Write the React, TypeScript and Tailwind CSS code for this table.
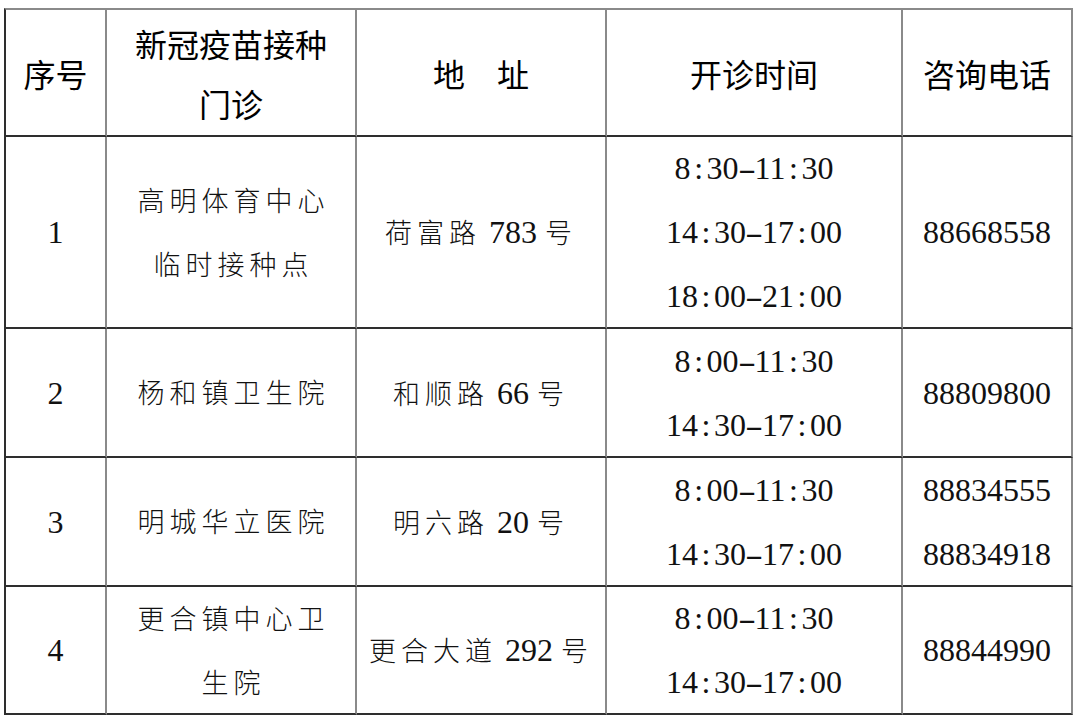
import React from "react";

const CJK = "[font-family:'Noto_Sans_CJK_SC',sans-serif]";
const SERIF = "[font-family:'Liberation_Serif','Noto_Sans_CJK_SC',serif]";

function Num({ s }: { s: string }) {
  return (
    <span className={`${SERIF} text-[32px] text-[#111]`}>
      {s.split("").map((c, i) =>
        c === ":" ? (
          <span key={i} className="inline-block w-[16px] text-center">
            :
          </span>
        ) : c === "-" ? (
          <span key={i} className="inline-block w-[16px] text-center scale-x-[1.7]">
            -
          </span>
        ) : (
          <React.Fragment key={i}>{c}</React.Fragment>
        )
      )}
    </span>
  );
}

function Zh({ s }: { s: string }) {
  return (
    <span className={`${CJK} font-light text-[27px] tracking-[5px] pl-[5px] text-[#111]`}>{s}</span>
  );
}

function Mixed({ parts }: { parts: string[] }) {
  return (
    <span className="whitespace-nowrap">
      {parts.map((p, i) =>
        /^[0-9 ]+$/.test(p) ? (
          <span key={i} className={`${SERIF} text-[32px] text-[#111] whitespace-pre`}>
            {p}
          </span>
        ) : (
          <span key={i} className={`${CJK} font-light text-[27px] tracking-[5px] text-[#111]`}>
            {p}
          </span>
        )
      )}
    </span>
  );
}

const cellBase =
  "flex flex-col items-center justify-center text-center border-r-2 border-r-[#8a8a8a] border-b-2 border-b-[#2e2e2e]";

function Cell({
  col,
  row,
  children,
}: {
  col: number;
  row: number;
  children: React.ReactNode;
}) {
  const cls = [
    cellBase,
    col === 0 ? "border-l-2 border-l-[#2e2e2e]" : "",
    col === 4 ? "border-r-[#2e2e2e]" : "",
    row === 0 ? "border-t-2 border-t-[#8a8a8a]" : "",
  ].join(" ");
  return <div className={cls}>{children}</div>;
}

function Head({ lines }: { lines: string[] }) {
  return (
    <div className={`${CJK} text-[32px] leading-[60px] text-black`}>
      {lines.map((l, i) => (
        <div key={i}>{l}</div>
      ))}
    </div>
  );
}

function Lines({ children }: { children: React.ReactNode }) {
  return <div className="flex flex-col items-center leading-[64px]">{children}</div>;
}

export default function App() {
  return (
    <div className="w-[1080px] h-[722px] bg-white pt-[8px] pl-[4px]">
      <div className="grid grid-cols-[103px_250px_250px_296px_170px] grid-rows-[129px_192px_129px_129px_128px] w-[1069px]">
        <Cell col={0} row={0}>
          <Head lines={["序号"]} />
        </Cell>
        <Cell col={1} row={0}>
          <Head lines={["新冠疫苗接种", "门诊"]} />
        </Cell>
        <Cell col={2} row={0}>
          <div className={`${CJK} text-[32px] text-black whitespace-pre`}>地　址</div>
        </Cell>
        <Cell col={3} row={0}>
          <Head lines={["开诊时间"]} />
        </Cell>
        <Cell col={4} row={0}>
          <Head lines={["咨询电话"]} />
        </Cell>

        <Cell col={0} row={1}>
          <Num s="1" />
        </Cell>
        <Cell col={1} row={1}>
          <Lines>
            <Zh s="高明体育中心" />
            <Zh s="临时接种点" />
          </Lines>
        </Cell>
        <Cell col={2} row={1}>
          <Mixed parts={["荷富路", " 783 ", "号"]} />
        </Cell>
        <Cell col={3} row={1}>
          <Lines>
            <Num s="8:30-11:30" />
            <Num s="14:30-17:00" />
            <Num s="18:00-21:00" />
          </Lines>
        </Cell>
        <Cell col={4} row={1}>
          <Num s="88668558" />
        </Cell>

        <Cell col={0} row={2}>
          <Num s="2" />
        </Cell>
        <Cell col={1} row={2}>
          <Zh s="杨和镇卫生院" />
        </Cell>
        <Cell col={2} row={2}>
          <Mixed parts={["和顺路", " 66 ", "号"]} />
        </Cell>
        <Cell col={3} row={2}>
          <Lines>
            <Num s="8:00-11:30" />
            <Num s="14:30-17:00" />
          </Lines>
        </Cell>
        <Cell col={4} row={2}>
          <Num s="88809800" />
        </Cell>

        <Cell col={0} row={3}>
          <Num s="3" />
        </Cell>
        <Cell col={1} row={3}>
          <Zh s="明城华立医院" />
        </Cell>
        <Cell col={2} row={3}>
          <Mixed parts={["明六路", " 20 ", "号"]} />
        </Cell>
        <Cell col={3} row={3}>
          <Lines>
            <Num s="8:00-11:30" />
            <Num s="14:30-17:00" />
          </Lines>
        </Cell>
        <Cell col={4} row={3}>
          <Lines>
            <Num s="88834555" />
            <Num s="88834918" />
          </Lines>
        </Cell>

        <Cell col={0} row={4}>
          <Num s="4" />
        </Cell>
        <Cell col={1} row={4}>
          <Lines>
            <Zh s="更合镇中心卫" />
            <Zh s="生院" />
          </Lines>
        </Cell>
        <Cell col={2} row={4}>
          <Mixed parts={["更合大道", " 292 ", "号"]} />
        </Cell>
        <Cell col={3} row={4}>
          <Lines>
            <Num s="8:00-11:30" />
            <Num s="14:30-17:00" />
          </Lines>
        </Cell>
        <Cell col={4} row={4}>
          <Num s="88844990" />
        </Cell>
      </div>
    </div>
  );
}
